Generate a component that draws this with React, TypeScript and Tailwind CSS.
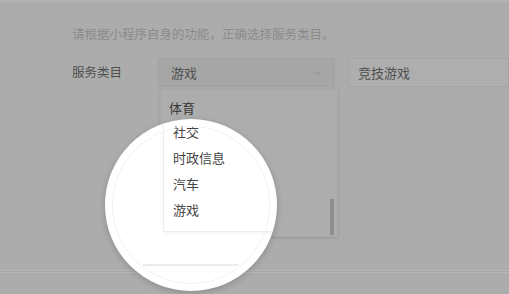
import React from 'react'
import { ChevronDown } from 'lucide-react'

const categories = ['体育', '社交', '时政信息', '汽车', '游戏']

export default function App() {
  return (
    <div
      className="relative flex h-[294px] w-[509px] flex-col overflow-hidden bg-[#acacac] text-[#4a4a4a]"
      style={{ fontFamily: '"Noto Sans CJK SC", "Noto Sans", sans-serif' }}
    >
      <div className="border-t-2 border-[#b3b3b3]" />

      <div className="pl-[72px] pt-[23px]">
        <p className="text-[12.5px] leading-[18px] text-[#8b8b8b]">请根据小程序自身的功能，正确选择服务类目。</p>

        <div className="mt-[15px] flex items-center">
          <span className="w-[86px] text-[12.5px] text-[#4f4f4f]">服务类目</span>
          <div className="flex h-[29px] w-[177px] items-center justify-between border border-[#a2a2a2] bg-[#a6a6a6] pl-[12px] pr-[10px] text-[13px] text-[#505050]">
            <span>游戏</span>
            <ChevronDown size={12} strokeWidth={2} className="text-[#8c8c8c]" />
          </div>
          <div className="ml-[13px] flex h-[29px] flex-1 items-center border border-[#a4a4a4] bg-[#aeaeae] pl-[9px] text-[13px] text-[#505050]">
            竞技游戏
          </div>
        </div>
      </div>

      <div className="mt-auto mb-[21px] h-[3px] border-y border-[#b6b6b6] bg-[#a6a6a6]" />

      {/* dropdown list (dimmed, only the first row shows outside the magnifier) */}
      <div className="absolute left-[160px] top-[89px] flex h-[148px] w-[178px] border border-[#a8a8a8] bg-[#adadad] shadow-sm">
        <div className="flex-1 pl-[8px] pt-[5px] text-[13px] text-[#383838]">
          <div className="flex h-[26px] items-center">{categories[0]}</div>
        </div>
        <div className="flex w-[8px] flex-col justify-end pb-[1px]">
          <div className="ml-[1px] h-[36px] w-[4px] bg-[#8e8e8e]" />
        </div>
      </div>

      {/* magnifier */}
      <div className="absolute left-[105px] top-[119px] h-[172px] w-[172px] overflow-hidden rounded-full bg-white shadow-[0_2px_6px_rgba(0,0,0,0.18)]">
        <div className="absolute inset-[7px] rounded-full border border-[#f1f1f1]" />
        <div className="ml-[58px] h-[113px] w-[140px] border-b border-l border-[#eeeeee] shadow-[0_2px_3px_rgba(0,0,0,0.04)]">
          <ul className="pl-[9px] text-[13px] text-[#444]">
            {categories.slice(1).map(c => (
              <li key={c} className="flex h-[26px] items-center">{c}</li>
            ))}
          </ul>
        </div>
        <div className="ml-[38px] mt-[32px] h-[2px] w-[96px] bg-[#ececec]" />
      </div>
    </div>
  )
}
